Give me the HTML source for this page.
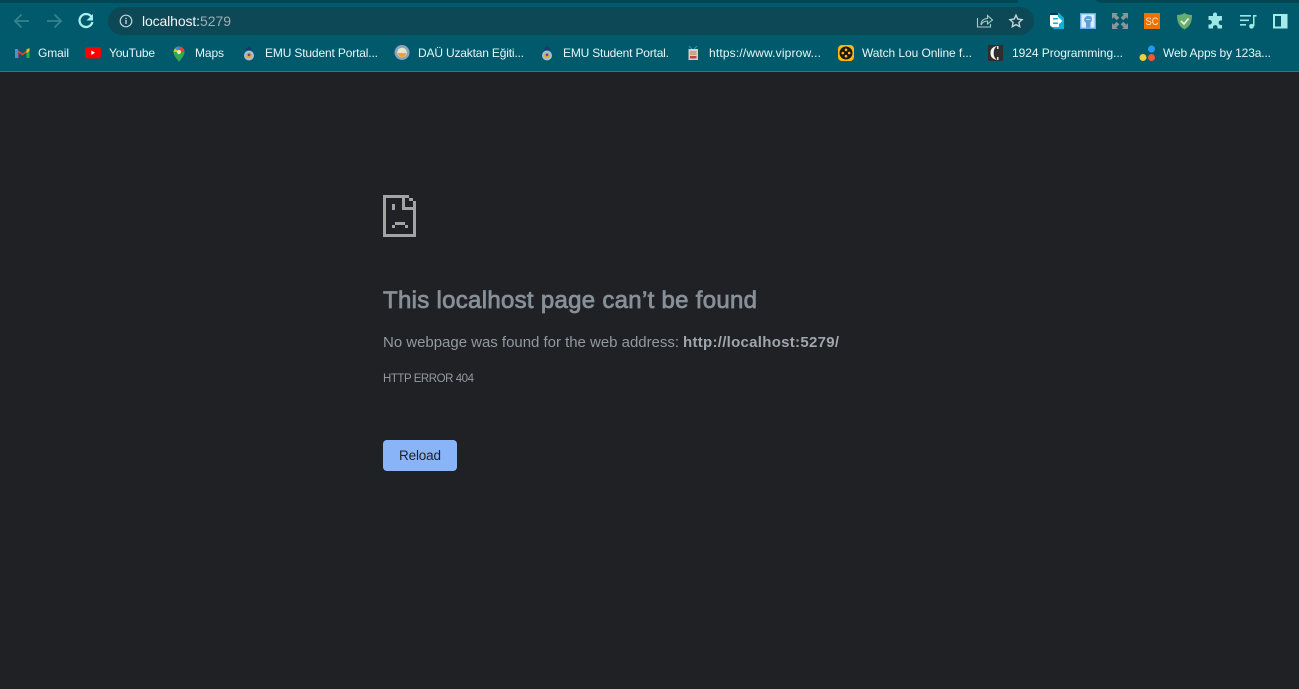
<!DOCTYPE html>
<html lang="en"><head><meta charset="utf-8"><title>localhost:5279</title>
<style>
html,body{margin:0;padding:0;width:1299px;height:689px;overflow:hidden;background:#202124}
svg{display:block}
text{font-family:"Liberation Sans",sans-serif}
.b{font-size:12px;fill:#e6f6f8}
</style></head><body>
<svg width="1299" height="689" viewBox="0 0 1299 689" xmlns="http://www.w3.org/2000/svg">
<rect width="1299" height="689" fill="#202124"/>
<!-- browser frame -->
<rect width="1299" height="72" fill="#005a6c"/>
<rect width="1018" height="3" fill="#014653"/>
<path d="M1095 0H1299V3H1105Q1099 3 1095 0Z" fill="#014653"/>
<rect y="71" width="1299" height="1" fill="#2b7886"/>
<rect x="108" y="7" width="926" height="28" rx="14" fill="#0c4855"/>
<!-- nav icons -->
<g fill="none" stroke-width="1.8">
<path d="M29 21H15.5M21.5 14.5L15 21l6.5 6.5" stroke="#35828f"/>
<path d="M47 21H60.5M54.5 14.5L61 21l-6.5 6.5" stroke="#35828f"/>
<path d="M91.2 16.5A6.5 6.5 0 1 0 92.4 22" stroke="#a8eeee" stroke-width="2.300"/>
</g>
<path d="M93 14v6.5h-6.5z" fill="#a8eeee"/>
<circle cx="126" cy="21" r="5.8" fill="none" stroke="#c4d2d6" stroke-width="1.2"/>
<rect x="125.3" y="20" width="1.4" height="4" fill="#c4d2d6"/><rect x="125.3" y="17.8" width="1.4" height="1.4" fill="#c4d2d6"/>
<text x="142" y="26" font-size="14" fill="#f1f5f6" textLength="58" lengthAdjust="spacing">localhost:</text>
<text x="200" y="26" font-size="14" fill="#9cb0b5" textLength="31" lengthAdjust="spacing">5279</text>
<!-- share and star -->
<path d="M977.5 18V27H990.5V24" fill="none" stroke="#b5c6ca" stroke-width="1.1"/>
<path d="M981 25C981 20.5 984 18.5 987.5 18.5V15.5L992.5 20L987.5 24V21C985 21 982.5 22 981 25Z" fill="none" stroke="#b5c6ca" stroke-width="1.1"/>
<path d="M1016 15.2l1.8 3.9 4.2.5-3.1 2.9.8 4.2-3.7-2.1-3.7 2.1.8-4.2-3.1-2.9 4.2-.5z" fill="none" stroke="#c6d5d8" stroke-width="1.4"/>
<!-- extensions -->
<path d="M1050 13H1059L1064 18V29H1054L1050 26Z" fill="#0ab4d8"/>
<path d="M1050 13H1058V15H1050Z" fill="#0b2f63"/>
<path d="M1050 15H1058V18H1053V24H1059V27H1052L1050 25Z" fill="#fff"/>
<path d="M1053 19.500H1058V17L1062.500 21L1058 25V22.500H1053Z" fill="#fff"/>
<rect x="1080.700" y="13.700" width="14.600" height="14.600" fill="#dcecf8" stroke="#62aef0" stroke-width="1.400"/>
<path d="M1084.500 18L1087 15.800L1091.500 16.500L1092 20.500L1090.500 22.500V27.500H1086V23L1084 20.500Z" fill="#5ba0de"/>
<path d="M1086 19.500H1090.500" stroke="#dcecf8" stroke-width=".8"/>
<g fill="#8c9699">
<path d="M1112 13h6l-1.700 1.700 3 3-2.600 2.600-3-3-1.700 1.700z"/>
<path d="M1128 13h-6l1.700 1.700-3 3 2.600 2.600 3-3 1.700 1.700z"/>
<path d="M1112 29h6l-1.700-1.700 3-3-2.600-2.600-3 3-1.700-1.700z"/>
<path d="M1128 29h-6l1.700-1.700-3-3 2.600-2.600 3 3 1.700-1.700z"/>
</g>
<rect x="1144" y="13" width="16" height="16" fill="#ee7203"/>
<text x="1145.500" y="25" font-size="11" fill="#ffe3c4" textLength="13" lengthAdjust="spacingAndGlyphs">SC</text>
<path d="M1184.500 13C1187 14.500 1189.500 15 1192 15C1192 22 1190 26.500 1184.500 29.500C1179 26.500 1177 22 1177 15C1179.500 15 1182 14.500 1184.500 13Z" fill="#68ad6b"/>
<path d="M1181 21L1184 24L1188.500 18.500" fill="none" stroke="#e8f4e8" stroke-width="1.700"/>
<path d="M1213 14.500a2 2 0 0 1 4 0V16h5v4.500h-1.500a2.300 2.300 0 0 0 0 4.500H1222v3.500h-4.500v-1.500a2.300 2.300 0 0 0-4.500 0V28.500H1208.500V24.500H1210a2.300 2.300 0 0 0 0-4.500H1208.500V16H1213Z" fill="#9fe6e6"/>
<g fill="#9fe6e6">
<rect x="1240" y="15" width="11" height="1.600"/><rect x="1240" y="19.500" width="9" height="1.600"/><rect x="1240" y="24" width="6" height="1.600"/>
<rect x="1253" y="15" width="1.500" height="11"/><rect x="1253" y="15" width="3.500" height="1.600"/><circle cx="1251.500" cy="26.300" r="2.400"/>
</g>
<rect x="1274" y="15" width="12.500" height="12.500" fill="none" stroke="#a4ecea" stroke-width="2"/>
<rect x="1281" y="14" width="6" height="14" fill="#a4ecea"/>
<!-- bookmark icons -->
<path d="M16 58V49L22.500 53.500L29 49V58H26.500V52.500L22.500 55.500L18.500 52.500V58Z" fill="#ea4335"/>
<rect x="15" y="49" width="3" height="9" fill="#4a90d9"/><rect x="26.500" y="49" width="3" height="9" fill="#34a853"/><path d="M26.500 49.500L29.500 48V51L26.500 53Z" fill="#fbbc04"/>
<rect x="85" y="47" width="16" height="11.500" rx="3" fill="#f00"/><path d="M91.300 50.500V55L95 52.750Z" fill="#fff"/>
<path d="M179 62C177 58.500 173.500 56 173.500 52A5.500 5.500 0 0 1 184.500 52C184.500 56 181 58.500 179 62Z" fill="#34a853"/>
<path d="M175 48.500A5.500 5.500 0 0 1 179 46.500V52Z" fill="#4285f4"/><path d="M179 46.500A5.500 5.500 0 0 1 184.500 52H179Z" fill="#ea4335"/><path d="M173.500 52A5 5 0 0 1 175 48.500L179 52Z" fill="#fbbc04"/><circle cx="179" cy="52" r="2" fill="#f6e7b0"/>
<path d="M245.500 49.500L249 46L252.500 49.500L249 51Z" fill="#1f3670"/><circle cx="249" cy="55.500" r="5" fill="#a9bcd2"/><circle cx="249" cy="55.500" r="2.800" fill="#e6a531"/><circle cx="249" cy="54.800" r="1.300" fill="#3c5a98"/>
<circle cx="402" cy="52.500" r="7.500" fill="#8fa3bc"/><circle cx="402" cy="52.500" r="4.800" fill="#e8e4d0"/><path d="M398 53A4 4 0 0 0 406 53Z" fill="#e8a52a"/>
<path d="M543.500 49.500L547 46L550.500 49.500L547 51Z" fill="#1f3670"/><circle cx="547" cy="55.500" r="5" fill="#a9bcd2"/><circle cx="547" cy="55.500" r="2.800" fill="#e6a531"/><circle cx="547" cy="54.800" r="1.300" fill="#3c5a98"/>
<path d="M689 46L692 49M697 46L694 49" stroke="#3a8ec0" stroke-width="1"/><rect x="688.500" y="49" width="9.500" height="11" fill="#d9cfc4"/><rect x="690" y="51" width="6.500" height="4" fill="#c9a87c"/><rect x="690" y="56" width="6.500" height="2.500" fill="#c04050"/>
<rect x="838" y="45" width="16" height="16" rx="4" fill="#fdb90c"/><circle cx="846" cy="53" r="6.500" fill="#1c1a10"/><g fill="#fdb90c"><circle cx="846" cy="49.800" r="1.300"/><circle cx="846" cy="56.200" r="1.300"/><circle cx="842.800" cy="53" r="1.300"/><circle cx="849.200" cy="53" r="1.300"/></g>
<rect x="988" y="45" width="15" height="16" fill="#2f2e2e"/><path d="M997 46C991.500 47 990.500 50 990.500 53C990.500 56 991.500 59 997 60C994.500 58 993.700 56 993.700 53C993.700 50 994.500 48 997 46Z" fill="#f4f4f4"/><rect x="997" y="46" width="1.500" height="3" fill="#e0e0e0"/><rect x="997" y="57" width="1.500" height="3" fill="#e0e0e0"/>
<circle cx="1151.500" cy="49" r="3.500" fill="#1f9cf0"/><circle cx="1143" cy="57.500" r="3.500" fill="#f8cf2e"/><circle cx="1151.500" cy="57.500" r="3.500" fill="#f4592b"/>
<!-- bookmark labels -->
<text class="b" x="38" y="57" textLength="31" lengthAdjust="spacing">Gmail</text>
<text class="b" x="109" y="57" textLength="46" lengthAdjust="spacing">YouTube</text>
<text class="b" x="195" y="57" textLength="29" lengthAdjust="spacing">Maps</text>
<text class="b" x="265" y="57" textLength="113" lengthAdjust="spacing">EMU Student Portal...</text>
<text class="b" x="418" y="57" textLength="106" lengthAdjust="spacing">DAÜ Uzaktan Eğiti...</text>
<text class="b" x="563" y="57" textLength="106" lengthAdjust="spacing">EMU Student Portal.</text>
<text class="b" x="709" y="57" textLength="112" lengthAdjust="spacing">https://www.viprow...</text>
<text class="b" x="862" y="57" textLength="110" lengthAdjust="spacing">Watch Lou Online f...</text>
<text class="b" x="1012" y="57" textLength="111" lengthAdjust="spacing">1924 Programming...</text>
<text class="b" x="1163" y="57" textLength="108" lengthAdjust="spacing">Web Apps by 123a...</text>
<!-- sad file icon -->
<g fill="#a3a3a3">
<rect x="383" y="195" width="3" height="42"/>
<rect x="383" y="234" width="33" height="3"/>
<rect x="383" y="195" width="26" height="3"/>
<rect x="413" y="201" width="3" height="36"/>
<rect x="402" y="195" width="3" height="15"/>
<rect x="402" y="207" width="14" height="3"/>
<rect x="409" y="198" width="4" height="3"/>
<rect x="392" y="204" width="3" height="6"/>
<rect x="395" y="222" width="10" height="3"/>
<rect x="392" y="225" width="3" height="3"/>
<rect x="405" y="225" width="3" height="3"/>
</g>
<!-- error text -->
<text x="383" y="308" font-size="24" fill="#879098" stroke="#879098" stroke-width=".75" textLength="374" lengthAdjust="spacing">This localhost page can’t be found</text>
<text x="383" y="347" font-size="15" fill="#939a9f" textLength="296" lengthAdjust="spacing">No webpage was found for the web address:</text>
<text x="683" y="347" font-size="15" font-weight="700" fill="#a0a6aa" textLength="156" lengthAdjust="spacing">http://localhost:5279/</text>
<text x="383" y="382" font-size="11.500" fill="#939a9f" textLength="91" lengthAdjust="spacing">HTTP ERROR 404</text>
<rect x="383" y="440" width="74" height="31" rx="4" fill="#8ab4f8"/>
<text x="399" y="460" font-size="13.500" fill="#202124" textLength="42" lengthAdjust="spacing">Reload</text>
</svg>
</body></html>
